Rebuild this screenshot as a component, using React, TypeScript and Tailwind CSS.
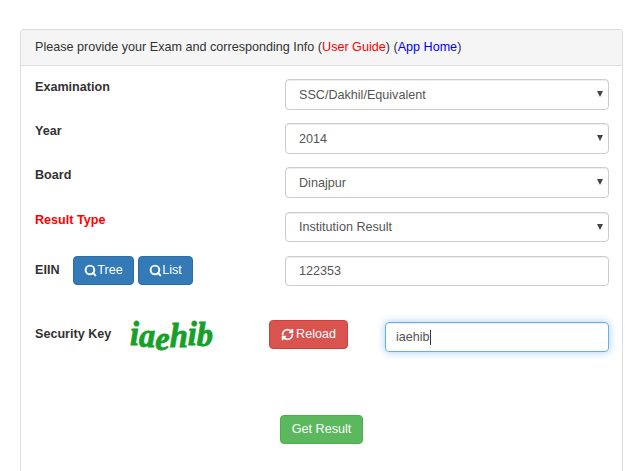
import React from "react";
import { Search, RefreshCw } from "lucide-react";

function Row({ label, labelClass, children, h }: { label: React.ReactNode; labelClass?: string; children: React.ReactNode; h: string }) {
  return (
    <div className={`flex ${h}`}>
      <div className={`w-[264px] pl-[14px] pt-[1px] font-bold text-[12.6px] leading-[14px] text-[#333] ${labelClass ?? ""}`}>{label}</div>
      {children}
    </div>
  );
}

function Select({ value, short }: { value: string; short?: boolean }) {
  return (
    <div className={`relative w-[324px] ${short ? "h-[30px]" : "h-[31px]"}`}>
      <select
        defaultValue={value}
        className={`appearance-none w-full h-full border border-[#ccc] rounded-[4px] bg-white pl-[13px] pr-5 ${short ? "pt-0" : "pt-[2px]"} text-[12.6px] text-[#555] shadow-[inset_0_1px_1px_rgba(0,0,0,0.075)]`}
      >
        <option>{value}</option>
      </select>
      <span className="absolute right-[6px] top-[12px] w-0 h-0 border-x-[3px] border-x-transparent border-t-[6px] border-t-[#444]" />
    </div>
  );
}

export default function App() {
  return (
    <div className="min-h-[471px] bg-white pt-[29px] pl-[20px] overflow-hidden font-['Liberation_Sans',Arial,sans-serif] text-[12.6px] text-[#333]">
      <div className="w-[603px] h-[442px] border border-b-0 border-[#ddd] rounded-t-[4px]">
        <div className="h-[36px] bg-[#f5f5f5] border-b border-[#ddd] pl-[14px] flex items-center text-[#333] rounded-t-[3px]">
          <span>
            Please provide your Exam and corresponding Info (<a className="text-[#f00]">User Guide</a>) (<a className="text-[#00f]">App Home</a>)
          </span>
        </div>
        <div className="pt-[13px]">
          <Row label="Examination" h="h-[44px]"><Select value="SSC/Dakhil/Equivalent" /></Row>
          <Row label="Year" h="h-[44px]"><Select value="2014" /></Row>
          <Row label="Board" h="h-[45px]"><Select value="Dinajpur" /></Row>
          <Row label="Result Type" labelClass="text-[#f00]" h="h-[44px]"><Select value="Institution Result" short /></Row>
          <div className="flex h-[66px]">
            <div className="w-[264px] pl-[14px] flex items-start gap-[4px]">
              <span className="w-[34px] pt-[7px] font-bold leading-[14px]">EIIN</span>
              <button className="w-[61px] h-[29px] pb-[1px] bg-[#337ab7] border border-[#2e6da4] rounded-[4px] text-white flex items-center justify-center">
                <Search size={13} strokeWidth={3.6} />Tree
              </button>
              <button className="w-[55px] h-[29px] pb-[1px] bg-[#337ab7] border border-[#2e6da4] rounded-[4px] text-white flex items-center justify-center">
                <Search size={13} strokeWidth={3.6} />List
              </button>
            </div>
            <input defaultValue="122353" className="w-[324px] h-[30px] border border-[#ccc] rounded-[4px] px-[13px] text-[#555] shadow-[inset_0_1px_1px_rgba(0,0,0,0.075)]" />
          </div>
          <div className="flex items-start">
            <div className="w-[109px] pl-[14px] pt-[5px] font-bold leading-[14px]">Security Key</div>
            <div className="w-[139px] h-[30px] -mt-[3px]">
              <svg width="86" height="34" viewBox="0 0 86 34" className="block overflow-visible">
                <text
                  x="0"
                  y="26"
                  dy="0 2 3 -3 -2 1"
                  textLength={83}
                  lengthAdjust="spacingAndGlyphs"
                  fontFamily="'Liberation Serif', serif"
                  fontWeight="bold"
                  fontStyle="italic"
                  fontSize="34"
                  fill="#16a029"
                  stroke="#16a029"
                  strokeWidth="0.9"
                >
                  iaehib
                </text>
              </svg>
            </div>
            <button className="w-[79px] h-[29px] -mt-[2px] pb-[1px] bg-[#d9534f] border border-[#d43f3a] rounded-[4px] text-white flex items-center justify-center gap-[2px]">
              <RefreshCw size={13} strokeWidth={3.2} />Reload
            </button>
            <div className="w-[37px]" />
            <div className="w-[224px] h-[30px] border border-[#66afe9] rounded-[4px] px-[10px] flex items-center text-[#555] shadow-[inset_0_1px_1px_rgba(0,0,0,0.075),0_0_8px_rgba(102,175,233,0.6)]">
              iaehib<span className="w-px h-[15px] bg-[#333]" />
            </div>
          </div>
          <div className="pt-[63px] pl-[259px]">
            <button className="w-[83px] h-[29px] pb-[1px] bg-[#5cb85c] border border-[#4cae4c] rounded-[4px] text-white">Get Result</button>
          </div>
        </div>
      </div>
    </div>
  );
}
